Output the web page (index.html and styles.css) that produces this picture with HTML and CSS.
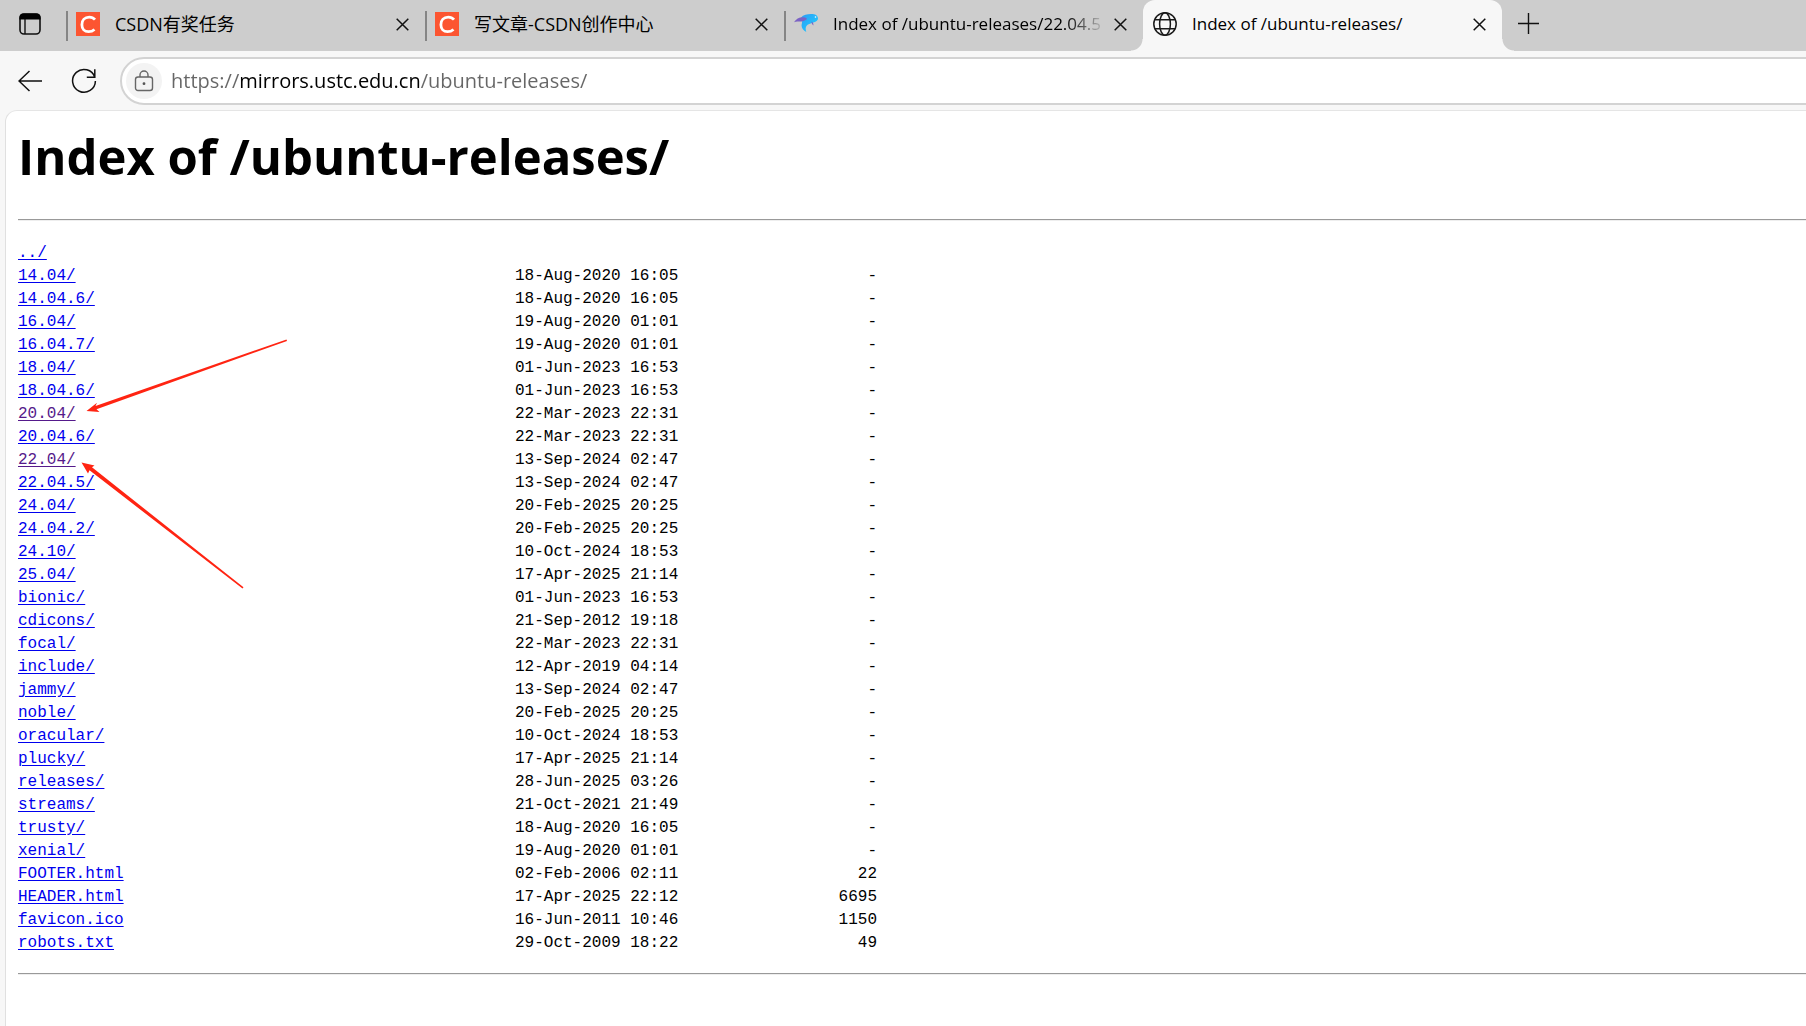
FILE: index.html
```html
<!DOCTYPE html>
<html lang="en">
<head>
    <meta charset="UTF-8">
    <meta name="viewport" content="width=device-width, initial-scale=1.0">
    <title>Index of /ubuntu-releases/</title>
    <link rel="stylesheet" href="styles.css">
</head>
<body>

    <header class="tab-strip">
        <button class="tab-menu" aria-label="Tab actions">
            <svg width="22" height="22" viewBox="0 0 22 22">
                <rect x="1" y="1" width="20" height="20" rx="4" fill="none" stroke="#111" stroke-width="1.6"/>
                <path d="M0.5 6.5V4.5a4 4 0 0 1 4-4h13a4 4 0 0 1 4 4v2z" fill="#000"/>
                <path d="M6 6v15" stroke="#111" stroke-width="1.4"/>
            </svg>
        </button>
        <div class="tab">
            <svg class="favicon" viewBox="0 0 24 24">
                <rect width="24" height="24" fill="#fc5531"/>
                <path d="M19 7.6C17.4 5.8 15.6 5.1 13.2 5.1c-4.4 0-7.3 3.2-7.3 7.6 0 4 2.6 7 6.6 7 2.4 0 4.2-.6 6-2.2" fill="none" stroke="#fff" stroke-width="2.8"/>
            </svg>
            <span class="tab-title" lang="zh">CSDN有奖任务</span>
            <button class="tab-close" aria-label="Close tab">
                <svg width="13" height="13" viewBox="0 0 13 13"><path d="M.7.7l11.6 11.6M12.3.7L.7 12.3"/></svg>
            </button>
        </div>
        <div class="tab">
            <svg class="favicon" viewBox="0 0 24 24">
                <rect width="24" height="24" fill="#fc5531"/>
                <path d="M19 7.6C17.4 5.8 15.6 5.1 13.2 5.1c-4.4 0-7.3 3.2-7.3 7.6 0 4 2.6 7 6.6 7 2.4 0 4.2-.6 6-2.2" fill="none" stroke="#fff" stroke-width="2.8"/>
            </svg>
            <span class="tab-title" lang="zh">写文章-CSDN创作中心</span>
            <button class="tab-close" aria-label="Close tab">
                <svg width="13" height="13" viewBox="0 0 13 13"><path d="M.7.7l11.6 11.6M12.3.7L.7 12.3"/></svg>
            </button>
        </div>
        <div class="tab">
            <svg class="favicon" viewBox="0 0 24 24">
                <defs>
                    <linearGradient id="whale" x1="0" y1="0" x2="1" y2="1">
                        <stop offset="0" stop-color="#2b9cf5"/>
                        <stop offset="1" stop-color="#1fd3ff"/>
                    </linearGradient>
                </defs>
                <path d="M7 5.500C10 2.500 15 1.700 20 2.300c3 .5 4.500 3 3.800 5.200-.7 2-3.500 3-6.500 3.700-3 .7-5 2-5.500 4.300-.3 1.800.1 3.200.5 4.500-3-1.300-5-4-4.700-7C7.900 11.300 9 8.500 7 5.500z" fill="url(#whale)"/>
                <path d="M0 10.300c2-3.300 5.500-5.300 9.500-5 1.800.1 3 .8 3.500 1.700-2.500 2.200-6 2.800-9 2.500C2.500 9.400 1.200 9.700 0 10.300z" fill="#7b62c4"/>
                <path d="M17.500 9.500c1.500.8 2 2.200 1.900 4-1.100-.9-2-2.200-1.900-4z" fill="#7b62c4"/>
                <circle cx="21.500" cy="5" r=".8" fill="#fff"/>
            </svg>
            <span class="tab-title long">Index of /ubuntu-releases/22.04.5</span>
            <button class="tab-close" aria-label="Close tab">
                <svg width="13" height="13" viewBox="0 0 13 13"><path d="M.7.7l11.6 11.6M12.3.7L.7 12.3"/></svg>
            </button>
        </div>
        <div class="tab active">
            <svg class="favicon" viewBox="0 0 24 24" fill="none" stroke="#1a1a1a" stroke-width="1.5">
                <circle cx="12" cy="12" r="11.2"/>
                <ellipse cx="12" cy="12" rx="5.4" ry="11.2"/>
                <path d="M2 7.8h20M2 16.8h20"/>
            </svg>
            <span class="tab-title">Index of /ubuntu-releases/</span>
            <button class="tab-close" aria-label="Close tab">
                <svg width="13" height="13" viewBox="0 0 13 13"><path d="M.7.7l11.6 11.6M12.3.7L.7 12.3"/></svg>
            </button>
        </div>
        <button class="new-tab" aria-label="New tab">
            <svg width="21" height="21" viewBox="0 0 21 21"><path d="M10.5 0v21M0 10.5h21" stroke="#111" stroke-width="1.4"/></svg>
        </button>
    </header>

    <nav class="toolbar">
        <button class="nav-btn" aria-label="Back">
            <svg width="24" height="22" viewBox="0 0 24 22"><path d="M24 11H1M11.5 1L1 11l10.5 10" fill="none" stroke="#111" stroke-width="1.5"/></svg>
        </button>
        <button class="nav-btn" aria-label="Refresh">
            <svg width="26" height="26" viewBox="0 0 26 26"><path d="M23.8 9.2A11.4 11.4 0 1 0 24.4 13M23.8 1.2v8h-8" fill="none" stroke="#111" stroke-width="1.5"/></svg>
        </button>
        <div class="address-bar">
            <button class="site-info" aria-label="View site information">
                <svg width="20" height="22" viewBox="0 0 20 22">
                    <rect x="1.5" y="7" width="17" height="13.5" rx="2.5" fill="none" stroke="#666" stroke-width="1.4"/>
                    <path d="M6 7V5a4 4 0 0 1 8 0v2" fill="none" stroke="#666" stroke-width="1.4"/>
                    <circle cx="10" cy="13.7" r="1.4" fill="#555"/>
                </svg>
            </button>
            <input class="url" type="text" aria-label="Address" value="https://mirrors.ustc.edu.cn/ubuntu-releases/">
        </div>
    </nav>

    <main class="page">
        <h1>Index of /ubuntu-releases/</h1>
        <hr>
        <div class="listing">
            <table>
                <tr><td class="name"><a href="#">../</a></td><td class="date"></td><td class="size"></td></tr>
                <tr><td class="name"><a href="#">14.04/</a></td><td class="date">18-Aug-2020 16:05</td><td class="size">-</td></tr>
                <tr><td class="name"><a href="#">14.04.6/</a></td><td class="date">18-Aug-2020 16:05</td><td class="size">-</td></tr>
                <tr><td class="name"><a href="#">16.04/</a></td><td class="date">19-Aug-2020 01:01</td><td class="size">-</td></tr>
                <tr><td class="name"><a href="#">16.04.7/</a></td><td class="date">19-Aug-2020 01:01</td><td class="size">-</td></tr>
                <tr><td class="name"><a href="#">18.04/</a></td><td class="date">01-Jun-2023 16:53</td><td class="size">-</td></tr>
                <tr><td class="name"><a href="#">18.04.6/</a></td><td class="date">01-Jun-2023 16:53</td><td class="size">-</td></tr>
                <tr><td class="name"><a href="#" class="visited">20.04/</a></td><td class="date">22-Mar-2023 22:31</td><td class="size">-</td></tr>
                <tr><td class="name"><a href="#">20.04.6/</a></td><td class="date">22-Mar-2023 22:31</td><td class="size">-</td></tr>
                <tr><td class="name"><a href="#" class="visited">22.04/</a></td><td class="date">13-Sep-2024 02:47</td><td class="size">-</td></tr>
                <tr><td class="name"><a href="#">22.04.5/</a></td><td class="date">13-Sep-2024 02:47</td><td class="size">-</td></tr>
                <tr><td class="name"><a href="#">24.04/</a></td><td class="date">20-Feb-2025 20:25</td><td class="size">-</td></tr>
                <tr><td class="name"><a href="#">24.04.2/</a></td><td class="date">20-Feb-2025 20:25</td><td class="size">-</td></tr>
                <tr><td class="name"><a href="#">24.10/</a></td><td class="date">10-Oct-2024 18:53</td><td class="size">-</td></tr>
                <tr><td class="name"><a href="#">25.04/</a></td><td class="date">17-Apr-2025 21:14</td><td class="size">-</td></tr>
                <tr><td class="name"><a href="#">bionic/</a></td><td class="date">01-Jun-2023 16:53</td><td class="size">-</td></tr>
                <tr><td class="name"><a href="#">cdicons/</a></td><td class="date">21-Sep-2012 19:18</td><td class="size">-</td></tr>
                <tr><td class="name"><a href="#">focal/</a></td><td class="date">22-Mar-2023 22:31</td><td class="size">-</td></tr>
                <tr><td class="name"><a href="#">include/</a></td><td class="date">12-Apr-2019 04:14</td><td class="size">-</td></tr>
                <tr><td class="name"><a href="#">jammy/</a></td><td class="date">13-Sep-2024 02:47</td><td class="size">-</td></tr>
                <tr><td class="name"><a href="#">noble/</a></td><td class="date">20-Feb-2025 20:25</td><td class="size">-</td></tr>
                <tr><td class="name"><a href="#">oracular/</a></td><td class="date">10-Oct-2024 18:53</td><td class="size">-</td></tr>
                <tr><td class="name"><a href="#">plucky/</a></td><td class="date">17-Apr-2025 21:14</td><td class="size">-</td></tr>
                <tr><td class="name"><a href="#">releases/</a></td><td class="date">28-Jun-2025 03:26</td><td class="size">-</td></tr>
                <tr><td class="name"><a href="#">streams/</a></td><td class="date">21-Oct-2021 21:49</td><td class="size">-</td></tr>
                <tr><td class="name"><a href="#">trusty/</a></td><td class="date">18-Aug-2020 16:05</td><td class="size">-</td></tr>
                <tr><td class="name"><a href="#">xenial/</a></td><td class="date">19-Aug-2020 01:01</td><td class="size">-</td></tr>
                <tr><td class="name"><a href="#">FOOTER.html</a></td><td class="date">02-Feb-2006 02:11</td><td class="size">22</td></tr>
                <tr><td class="name"><a href="#">HEADER.html</a></td><td class="date">17-Apr-2025 22:12</td><td class="size">6695</td></tr>
                <tr><td class="name"><a href="#">favicon.ico</a></td><td class="date">16-Jun-2011 10:46</td><td class="size">1150</td></tr>
                <tr><td class="name"><a href="#">robots.txt</a></td><td class="date">29-Oct-2009 18:22</td><td class="size">49</td></tr>
            </table>
            <!-- red arrows pointing at 20.04 and 22.04 -->
            <svg class="arrows" width="216" height="256" viewBox="78 336 216 256" fill="#ff2412">
                <path d="M86.500 411L97 402.800L95.500 406L286.500 339.500L287 341L96.500 409.200L99.500 412z"/>
                <path d="M81.500 462.500L94.500 465.500L92 467.300L243.500 587.300L242.500 588.500L89.500 470.300L88 473.500z"/>
            </svg>
        </div>
        <hr>
    </main>

</body>
</html>
```
FILE: styles.css
```css
* {
    box-sizing: border-box;
}
body {
    margin: 0;
    min-height: 100vh;
    display: flex;
    flex-direction: column;
    background-color: #f7f7f7;
    color: #000;
    font-family: "Open Sans", "Noto Sans CJK SC", sans-serif;
    overflow-x: hidden;
}
button {
    display: flex;
    align-items: center;
    justify-content: center;
    padding: 0;
    border: none;
    background: none;
    cursor: pointer;
}

/* Tabs */
.tab-strip {
    display: flex;
    height: 51px;
    background-color: #cdcdcd;
}
.tab-menu {
    width: 66px;
    padding: 0 6px 3px 0;
}
.tab {
    position: relative;
    flex: 0 1 359px;
    min-width: 0;
    display: flex;
    align-items: center;
    padding: 0 16px 3px 10px;
}
.tab:not(.active)::before {
    content: "";
    position: absolute;
    left: 0;
    top: 11px;
    width: 2px;
    height: 30px;
    background-color: #858585;
}
.tab.active {
    background-color: #f7f7f7;
    border-radius: 12px 12px 0 0;
}
/* curved feet of the active tab */
.tab.active::before,
.tab.active::after {
    content: "";
    position: absolute;
    bottom: 0;
    width: 12px;
    height: 12px;
}
.tab.active::before {
    right: 100%;
    background: radial-gradient(circle at 0 0, #cdcdcd 11px, #f7f7f7 12px);
}
.tab.active::after {
    left: 100%;
    background: radial-gradient(circle at 100% 0, #cdcdcd 11px, #f7f7f7 12px);
}
.favicon {
    flex: none;
    width: 24px;
    height: 24px;
}
.tab-title {
    flex: 1;
    margin: 0 8px 0 15px;
    overflow: hidden;
    white-space: nowrap;
    font-size: 17px;
    line-height: 24px;
}
.tab-title:lang(zh) {
    font-size: 18px;
}
.tab-title.long {
    -webkit-mask-image: linear-gradient(to left, transparent, #000 40px);
    mask-image: linear-gradient(to left, transparent, #000 40px);
}
.tab-close svg {
    display: block;
    fill: none;
    stroke: #111;
    stroke-width: 1.5;
}
.new-tab {
    width: 52px;
    padding-bottom: 5px;
}

/* Toolbar */
.toolbar {
    display: flex;
    align-items: center;
    height: 59px;
    padding-left: 3px;
}
.nav-btn {
    width: 54px;
    height: 48px;
}
.address-bar {
    flex: 1;
    display: flex;
    align-items: center;
    height: 48px;
    margin-left: 9px;
    margin-right: -30px;
    padding-left: 4px;
    background-color: #fff;
    border: 2px solid #d3d3d3;
    border-radius: 24px;
}
.site-info {
    width: 36px;
    height: 36px;
    border-radius: 50%;
    background-color: #f3f3f3;
}
/* host part is darker than the rest of the address */
.url {
    flex: 1;
    min-width: 0;
    margin-left: 9px;
    padding: 0;
    border: none;
    outline: none;
    font-family: inherit;
    font-size: 20px;
    color: transparent;
    caret-color: #000;
    background-image: linear-gradient(to right, #666 68px, #000 68px, #000 249px, #666 249px);
    -webkit-background-clip: text;
    background-clip: text;
}

/* Directory listing */
.page {
    flex: 1;
    margin-left: 5px;
    padding-left: 12px;
    background-color: #fff;
    border-top: 1px solid #e5e5e5;
    border-left: 1px solid #e0e0e0;
    border-top-left-radius: 12px;
}
h1 {
    margin: 10px 0 28px;
    font-size: 49px;
    line-height: 70px;
}
hr {
    margin: 0;
    border: none;
    border-top: 1px solid #999;
    border-bottom: 1px solid #eee;
}
.listing {
    position: relative;
    padding: 21px 0 18px;
}
table {
    border-collapse: collapse;
    font-family: "Liberation Mono", monospace;
    font-size: 16px;
    line-height: 23px;
}
td {
    padding: 0;
    white-space: nowrap;
}
.name {
    width: 497px;
}
.date {
    width: 166px;
}
.size {
    width: 196px;
    text-align: right;
}
a {
    color: #0000ee;
    text-underline-offset: 2px;
}
a.visited {
    color: #551a8b;
}
.arrows {
    position: absolute;
    left: 60px;
    top: 115px;
    pointer-events: none;
}
```
